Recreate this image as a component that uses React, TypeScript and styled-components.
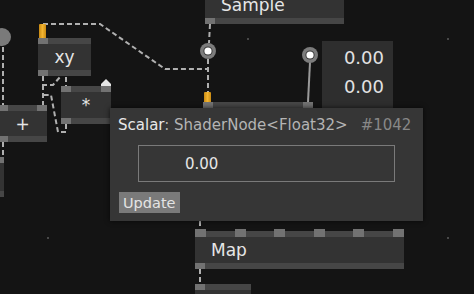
import React from 'react';
import styled, { createGlobalStyle } from 'styled-components';

const GlobalStyle = createGlobalStyle`
  html, body {
    margin: 0;
    padding: 0;
    background: #141414;
  }
  body {
    font-family: "DejaVu Sans", "Liberation Sans", sans-serif;
  }
`

type NodeSpec = {
  x: number
  y: number
  w: number
  h: number
  label?: string
  align?: 'center' | 'left'
  top: number
  bottom: number
  tallTop?: boolean
  orange?: number
  orangeH?: number
  roof?: boolean
}

const nodes: NodeSpec[] = [
  { x: 205, y: -14, w: 139, h: 38, label: 'Sample', align: 'left', top: 0, bottom: 1 },
  { x: 38, y: 38, w: 53, h: 38, label: 'xy', top: 1, bottom: 1, orange: 0, orangeH: 14 },
  { x: 61, y: 86, w: 50, h: 38, label: '*', top: 2, bottom: 1, roof: true },
  { x: -2, y: 105, w: 49, h: 37, label: '+', top: 2, bottom: 1 },
  { x: -36, y: 157, w: 40, h: 40, top: 2, bottom: 1 },
  { x: 203, y: 102, w: 110, h: 40, top: 2, bottom: 1, orange: 0, orangeH: 10 },
  { x: 195, y: 231, w: 209, h: 38, label: 'Map', align: 'left', top: 6, bottom: 1, tallTop: true },
  { x: 195, y: 284, w: 56, h: 30, top: 1, bottom: 0 },
]

const wires = [
  'M43 24 L100 24 L165 69 L208 69',
  'M210 24 L209 43',
  'M208 59 L208 92',
  'M3 47 L3 105',
  'M43 76 L43 85 L53 85 L60 77',
  'M66 77 L66 86',
  'M43 85 L43 105',
  'M66 124 L66 132 L58 132 L51 95 L43 95',
  'M3 142 L3 157',
  'M200 221 L200 230',
  'M200 269 L200 284',
]

const dots: [number, number][] = [
  [248, 39],
  [448, 39],
  [48, 238],
  [448, 238],
]

// third value sits mostly under the inspector
const values = ['0.00', '0.00', '0.00']

const App: React.FC = () => {
  return (
    <>
      <GlobalStyle />
      <Canvas>
        <Wires width={474} height={294}>
          {dots.map(([x, y], i) => (
            <circle key={i} cx={x} cy={y} r={1} fill="#5a5a5a" />
          ))}
          {wires.map((d, i) => (
            <path key={i} d={d} fill="none" stroke="#b0b0b0" strokeWidth={2} strokeDasharray="5 3" />
          ))}
          <path d="M310 62 L308 102" stroke="#9a9a9a" strokeWidth={2} fill="none" />
          <circle cx={2} cy={37} r={9} fill="#7a7a7a" />
          <IoKnob cx={208} cy={51} />
          <IoKnob cx={310} cy={55} />
        </Wires>

        {nodes.map((n, i) => (
          <NodeBox key={i} $x={n.x} $y={n.y} $w={n.w} $h={n.h}>
            <Bar>
              {Array.from({ length: n.top }).map((_, j) => (
                <Pin key={j} $tall={n.tallTop} $wide={n.tallTop}>
                  {n.orange === j && <OrangeTab $h={n.orangeH || 10} />}
                  {n.roof && j === n.top - 1 && (
                    <Roof viewBox="0 0 10 7" width={10} height={7}>
                      <path d="M5 0 L10 5 L10 7 L0 7 L0 5 Z" fill="#e6e6e6" />
                    </Roof>
                  )}
                </Pin>
              ))}
            </Bar>
            <Body $align={n.align}>{n.label}</Body>
            <Bar>
              {Array.from({ length: n.bottom }).map((_, j) => (
                <Pin key={j} />
              ))}
            </Bar>
          </NodeBox>
        ))}

        <ValueBox>
          {values.map((v, i) => (
            <ValueLine key={i}>{v}</ValueLine>
          ))}
        </ValueBox>

        <Inspector>
          <Title>
            <TypeName>Scalar</TypeName>
            <TypeSig>: ShaderNode&lt;Float32&gt;</TypeSig>
            <NodeId>#1042</NodeId>
          </Title>
          <ValueInput>0.00</ValueInput>
          <UpdateButton>Update</UpdateButton>
        </Inspector>
      </Canvas>
    </>
  )
}

const IoKnob: React.FC<{ cx: number; cy: number }> = ({ cx, cy }) => (
  <g>
    <circle cx={cx} cy={cy} r={8} fill="#7c7c7c" />
    <circle cx={cx} cy={cy} r={4.6} fill="#3a3a3a" />
    <circle cx={cx} cy={cy} r={3.6} fill="#ffffff" />
  </g>
)

const Canvas = styled.div`
  position: relative;
  width: 474px;
  height: 294px;
  overflow: hidden;
  background: #141414;
`

const Wires = styled.svg`
  position: absolute;
  left: 0;
  top: 0;
`

const NodeBox = styled.div<{ $x: number; $y: number; $w: number; $h: number }>`
  position: absolute;
  left: ${p => p.$x}px;
  top: ${p => p.$y}px;
  width: ${p => p.$w}px;
  height: ${p => p.$h}px;
  display: flex;
  flex-direction: column;
  background: #333333;
`

const Bar = styled.div`
  height: 6px;
  flex-shrink: 0;
  background: #464646;
  display: flex;
  justify-content: space-between;
  align-items: flex-end;
`

const Pin = styled.div<{ $tall?: boolean; $wide?: boolean }>`
  position: relative;
  width: ${p => (p.$wide ? 11 : 10)}px;
  height: ${p => (p.$tall ? 8 : 6)}px;
  flex-shrink: 0;
  background: #727272;
`

const OrangeTab = styled.div<{ $h: number }>`
  position: absolute;
  left: 1px;
  bottom: 100%;
  width: 7px;
  height: ${p => p.$h}px;
  border-radius: 1px 1px 0 0;
  background: linear-gradient(90deg, #c98a12, #f2b431 50%, #c98a12);
`

const Roof = styled.svg`
  position: absolute;
  left: 0;
  bottom: 100%;
  display: block;
`

const Body = styled.div<{ $align?: 'center' | 'left' }>`
  flex: 1;
  display: flex;
  align-items: center;
  justify-content: ${p => (p.$align === 'left' ? 'flex-start' : 'center')};
  padding-left: ${p => (p.$align === 'left' ? 16 : 0)}px;
  color: #e6e6e6;
  font-size: 17px;
  white-space: nowrap;
  overflow: hidden;
`

const ValueBox = styled.div`
  position: absolute;
  left: 322px;
  top: 41px;
  width: 71px;
  height: 90px;
  padding-top: 2px;
  box-sizing: border-box;
  background: #2e2e2e;
  display: flex;
  flex-direction: column;
  align-items: flex-end;
  overflow: hidden;
`

const ValueLine = styled.div`
  padding-right: 9px;
  font-size: 18px;
  line-height: 29px;
  color: #e2e2e2;
`

const Inspector = styled.div`
  position: absolute;
  left: 110px;
  top: 108px;
  width: 313px;
  height: 113px;
  box-sizing: border-box;
  padding: 8px 8px;
  background: #363636;
  box-shadow: 0 0 5px rgba(0, 0, 0, 0.7);
  display: flex;
  flex-direction: column;
  align-items: flex-start;
`

const Title = styled.div`
  font-size: 15px;
  line-height: 18px;
  white-space: nowrap;
`

const TypeName = styled.span`
  color: #e8e8e8;
`

const TypeSig = styled.span`
  color: #b4b4b4;
`

const NodeId = styled.span`
  margin-left: 13px;
  color: #888888;
`

const ValueInput = styled.div`
  margin: 11px 0 0 20px;
  width: 257px;
  height: 37px;
  box-sizing: border-box;
  border: 1px solid #7a7a7a;
  padding-left: 46px;
  display: flex;
  align-items: center;
  font-size: 15px;
  color: #e6e6e6;
`

const UpdateButton = styled.div`
  margin: 10px 0 0 1px;
  height: 21px;
  padding: 0 4px;
  display: flex;
  align-items: center;
  background: #7a7a7a;
  color: #e4e4e4;
  font-size: 14.5px;
`

export default App
